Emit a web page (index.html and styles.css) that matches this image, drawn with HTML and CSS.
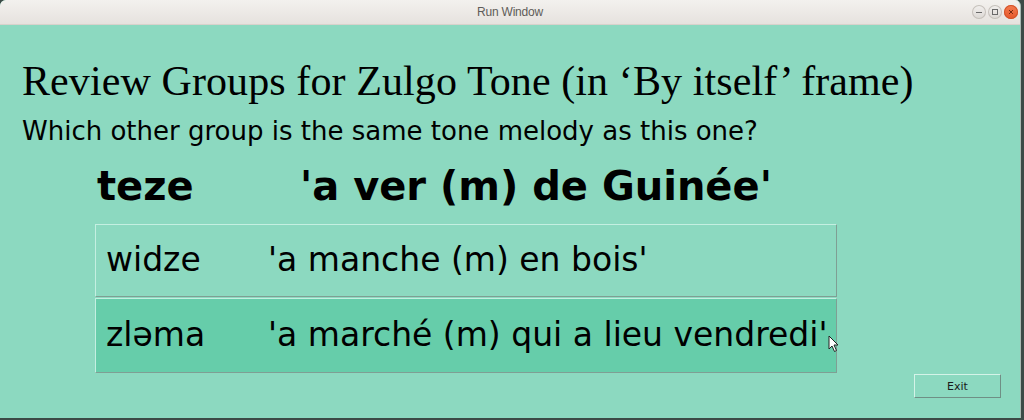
FILE: index.html
```html
<!DOCTYPE html>
<html>
<head>
<meta charset="utf-8">
<link rel="stylesheet" href="styles.css">
</head>
<body>
<div class="window">
  <div class="titlebar">
    <span class="wtitle">Run Window</span>
    <div class="wbtns">
      <span class="wbtn"><svg width="14" height="14" viewBox="0 0 14 14"><line x1="4" y1="7.5" x2="10" y2="7.5" stroke="#6a6a6a" stroke-width="1"/></svg></span>
      <span class="wbtn"><svg width="14" height="14" viewBox="0 0 14 14"><rect x="4.5" y="4.5" width="5" height="5" fill="none" stroke="#6a6a6a" stroke-width="1"/></svg></span>
      <span class="wbtn close"><svg width="14" height="14" viewBox="0 0 14 14"><path d="M5 5 L9 9 M9 5 L5 9" stroke="#7a2a10" stroke-width="1"/></svg></span>
    </div>
  </div>
  <div class="content">
    <h1 class="title">Review Groups for Zulgo Tone (in ‘By itself’ frame)</h1>
    <p class="question">Which other group is the same tone melody as this one?</p>
    <div class="target">
      <span class="tword">teze</span>
      <span class="tgloss">'a ver (m) de Guinée'</span>
    </div>
    <div class="options">
      <div class="opt">
        <span class="oword">widze</span>
        <span class="ogloss">'a manche (m) en bois'</span>
      </div>
      <div class="opt active">
        <span class="oword">zləma</span>
        <span class="ogloss">'a marché (m) qui a lieu vendredi'</span>
        <svg class="cursor" width="12" height="18" viewBox="0 0 12 18"><path d="M1 1 L1 14 L4 11 L6.5 16.5 L8.5 15.5 L6 10 L10 10 Z" fill="#fff" stroke="#222" stroke-width="1" stroke-linejoin="round"/></svg>
      </div>
    </div>
    <div class="footer">
      <button class="exit">Exit</button>
    </div>
  </div>
</div>
</body>
</html>
```

FILE: styles.css
```css
html, body {
  margin: 0;
  padding: 0;
}
body {
  width: 1024px;
  height: 420px;
  background: #3c4a46;
  overflow: hidden;
}
.window {
  width: 1020px;
  height: 418px;
  display: flex;
  flex-direction: column;
  background: #8cd9c0;
  border-right: 1px solid #a9b8b2;
  border-radius: 6px 6px 0 0;
  overflow: hidden;
}
.titlebar {
  height: 24px;
  flex: none;
  display: flex;
  align-items: center;
  justify-content: center;
  position: relative;
  background: linear-gradient(#f3f1ee, #e6e2de);
  border-bottom: 1px solid #d8d2cc;
}
.wtitle {
  font-family: "Liberation Sans Narrow", "Liberation Sans", sans-serif;
  font-size: 12px;
  color: #5e5c58;
  letter-spacing: -0.2px;
}
.wbtns {
  position: absolute;
  right: 2px;
  top: 5px;
  display: flex;
  gap: 2px;
}
.wbtn {
  width: 14px;
  height: 14px;
  border-radius: 50%;
  background: linear-gradient(#f2f0ee, #dcd8d4);
  box-shadow: inset 0 0 0 1px #c6c1bb;
  display: flex;
}
.wbtn.close {
  background: linear-gradient(#f47c50, #e5572a);
  box-shadow: inset 0 0 0 1px #d2532a;
}
.content {
  flex: 1;
  padding: 0 0 0 22px;
  display: flex;
  flex-direction: column;
}
.title {
  margin: 32px 0 0 0;
  font-family: "Liberation Serif", serif;
  font-weight: normal;
  font-size: 42px;
  line-height: 48px;
  color: #000;
  letter-spacing: 0.1px;
}
.question {
  margin: 10px 0 0 0;
  font-family: "DejaVu Sans", sans-serif;
  font-size: 26px;
  line-height: 32px;
  color: #000;
}
.target {
  margin: 16px 0 0 75px;
  display: flex;
  font-family: "DejaVu Sans", sans-serif;
  font-weight: bold;
  font-size: 40px;
  line-height: 46px;
}
.tword {
  width: 203px;
}
.options {
  margin: 15px 0 0 73px;
  width: 742px;
  display: flex;
  flex-direction: column;
  gap: 1px;
}
.opt {
  height: 73px;
  box-sizing: border-box;
  display: flex;
  align-items: center;
  padding: 0 0 2px 10px;
  font-family: "DejaVu Sans", sans-serif;
  font-size: 33px;
  border-top: 1px solid #c4efe1;
  border-left: 1px solid #c4efe1;
  border-right: 1px solid #7f9f94;
  border-bottom: 1px solid #7f9f94;
  position: relative;
}
.opt.active {
  background: #66cdaa;
  height: 75px;
}
.oword {
  width: 162px;
}
.cursor {
  position: absolute;
  left: 732px;
  top: 36px;
}
.footer {
  display: flex;
  justify-content: flex-end;
  padding-right: 19px;
  margin-top: 1px;
}
.exit {
  width: 87px;
  height: 24px;
  background: #8cd9c0;
  font-family: "DejaVu Sans", sans-serif;
  font-size: 11px;
  color: #1a1a1a;
  border-top: 1px solid #d4f3e8;
  border-left: 1px solid #d4f3e8;
  border-right: 1px solid #6f8f85;
  border-bottom: 1px solid #6f8f85;
  padding: 0;
}
```
